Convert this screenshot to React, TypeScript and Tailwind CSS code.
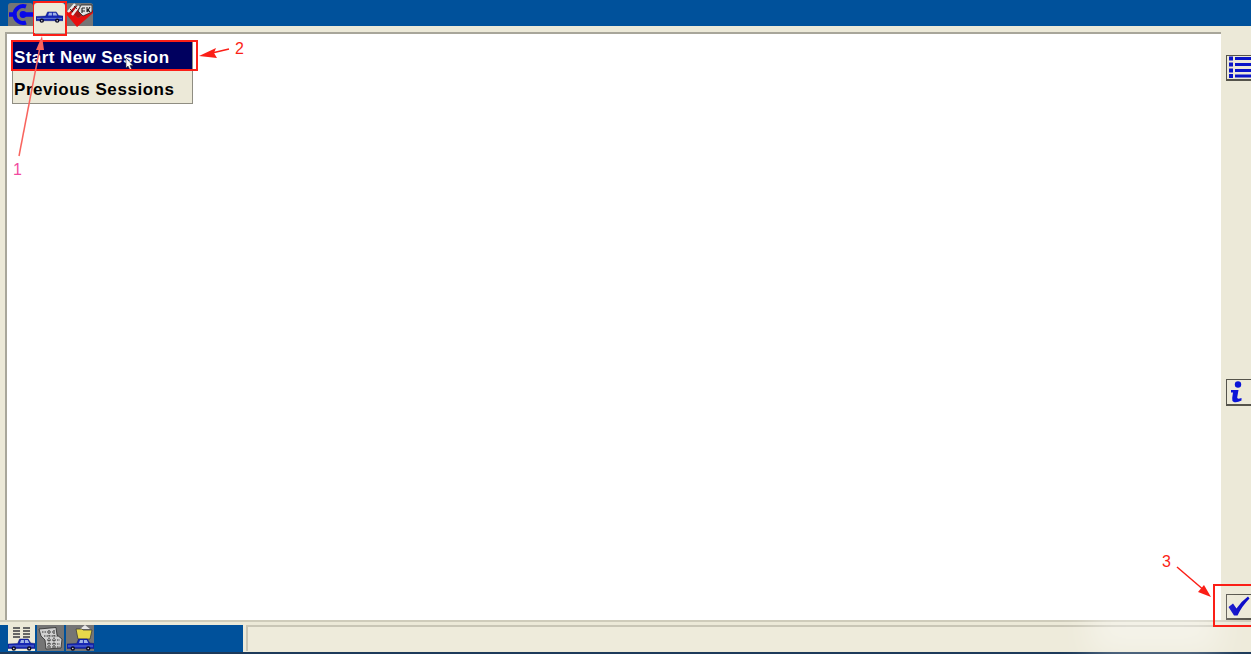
const font = "font-['Liberation_Sans',Arial,sans-serif]";

function Truck({ className }: { className?: string }) {
  return (
    <svg viewBox="0 0 28 13" preserveAspectRatio="none" className={className}>
      <path d="M0 6 L10 5.5 L12 1 L21 1 L23.5 5 L28 5.5 L28 10.5 L0 10.5 Z" fill="#1626b4" stroke="#0b1a70" strokeWidth="0.5" />
      <path d="M13.5 2 L16.5 2 L16.5 5 L12.5 5 Z M17.5 2 L20.5 2 L22 5 L17.5 5 Z" fill="#9fb2e6" />
      <path d="M1 8 H27" stroke="#7f95dd" strokeWidth="0.8" />
      <circle cx="6" cy="10.5" r="2.3" fill="#0c0c28" />
      <circle cx="22" cy="10.5" r="2.3" fill="#0c0c28" />
      <circle cx="6" cy="10.5" r="0.8" fill="#d8d8d8" />
      <circle cx="22" cy="10.5" r="0.8" fill="#d8d8d8" />
    </svg>
  );
}

function Connector() {
  return (
    <svg viewBox="0 0 25 23" className="h-[23px] w-[25px]">
      <path d="M1 11.5 H8 M13 11.5 H25" stroke="#0808e8" strokeWidth="4.5" />
      <path d="M18 3.5 A8.5 8.5 0 1 0 18 19.5" fill="none" stroke="#0808e8" strokeWidth="4" />
      <circle cx="15" cy="11.5" r="3.4" fill="#0808e8" />
    </svg>
  );
}

function Tools() {
  return (
    <svg viewBox="0 0 27 24" className="h-[24px] w-[27px]">
      <path d="M0 11 L11 24 L27 10 L27 7 L12 15 L3 7 Z" fill="#e80e0e" />
      <path d="M3 7 L12 15 L20 10 L10 3 Z" fill="#b01212" />
      <path d="M2 9 L9 1 M6 12 L13 3" stroke="#ececec" strokeWidth="2.4" />
      <path d="M4 6 L7 9 M8 3 L11 6" stroke="#222" strokeWidth="0.9" />
      <path d="M12 8 L15 2 L26 2 L26 9 L17 13 Z" fill="#e2e2e2" stroke="#222" strokeWidth="0.8" />
      <path d="M16 5 V10 M16 5 H19 M16 8 H19 M21 4 V9 M21 9 L24 4 M21 6 L24 9" fill="none" stroke="#222" strokeWidth="1.1" />
    </svg>
  );
}

function ListIcon() {
  return (
    <svg viewBox="0 0 23 23" className="h-[23px] w-[23px]">
      {[2.5, 8.5, 14.5, 20].map((y) => (
        <g key={y}>
          <rect x="1" y={y - 2} width="4" height="4" fill="#0a14c8" />
          <rect x="7" y={y - 1.5} width="16" height="3" fill="#0a14c8" />
        </g>
      ))}
    </svg>
  );
}

function InfoIcon() {
  return (
    <svg viewBox="0 0 16 22" className="h-[22px] w-[16px]">
      <circle cx="10" cy="3.5" r="3.2" fill="#0a14d8" />
      <path d="M3 9 H10.5 L9.2 16.5 Q9 18.5 13.5 17 L13.5 19.5 Q9 22 5.8 21 Q3.8 20 4.2 17 L5 11.5 H3 Z" fill="#0a14d8" />
    </svg>
  );
}

function CheckIcon() {
  return (
    <svg viewBox="0 0 22 20" className="h-[20px] w-[22px]">
      <path d="M0.5 11 L5 7.5 L8.5 12.5 Q13 5.5 20 0.5 L21.5 2.5 Q14 10 9.5 19.5 L6 19.5 Z" fill="#0808c8" />
    </svg>
  );
}

function FormMap() {
  return (
    <svg viewBox="0 0 25 23" className="h-[23px] w-[25px]">
      <path d="M1 2 L18 0.5 L19 8 L24 12 L23 21 L8 22 L7 13 L3 9 Z" fill="#d0d0d0" stroke="#2c2c2c" strokeWidth="0.8" />
      <path d="M4 5 H17 M6 9 H20 M9 13 H22 M9 17 H22 M9 20 H22 M11 3 V21 M16 3 V21" stroke="#333" strokeWidth="1.1" strokeDasharray="1.5 1" />
    </svg>
  );
}

function RailButton({ className, children }: { className?: string; children: React.ReactNode }) {
  return (
    <div className={`flex h-[27px] w-[30px] items-center justify-start border border-b-2 border-[#55534b] bg-[#ece9d8] pl-[1px] ${className ?? ''}`}>
      {children}
    </div>
  );
}

function Annotations() {
  return (
    <div className="pointer-events-none absolute inset-0">
      <div className="absolute left-[33px] top-[1px] h-[35px] w-[34px] border-2 border-[#fb1f17]" />
      <div className="absolute left-[11px] top-[40px] h-[31px] w-[187px] border-2 border-[#fb1f17]" />
      <div className="absolute left-[1213px] top-[584px] h-[43px] w-[40px] border-2 border-[#fb1f17]" />

      <svg className="absolute left-0 top-0 h-[654px] w-[1251px]" viewBox="0 0 1251 654">
        <path d="M19 156 L40 47" stroke="#f8645e" strokeWidth="1.5" />
        <path d="M42 36 L36 50 L44 50 Z" fill="#f8645e" />
        <path d="M229 49 L212 53" stroke="#fb1f17" strokeWidth="1.5" />
        <path d="M199 56 L216 48 L214 53 L217 58 Z" fill="#fb1f17" />
        <path d="M1177 567 L1205 591" stroke="#fb1f17" strokeWidth="1.5" />
        <path d="M1211 597 L1198 592 L1204 585 Z" fill="#fb1f17" />
      </svg>

      <span className={`absolute left-[13px] top-[160px] text-[16px] leading-[20px] text-[#f24aa0] ${font}`}>1</span>
      <span className={`absolute left-[235px] top-[39px] text-[16px] leading-[20px] text-[#fb1f17] ${font}`}>2</span>
      <span className={`absolute left-[1162px] top-[552px] text-[16px] leading-[20px] text-[#fb1f17] ${font}`}>3</span>
    </div>
  );
}

export default function App() {
  return (
    <div className={`relative flex h-[654px] w-[1251px] flex-col overflow-hidden bg-[#ece9d8] ${font}`}>
      {/* top tabs */}
      <div className="flex h-[26px] shrink-0 items-start gap-px bg-[#00519b] pl-[8px] pt-[3px]">
        <div className="flex h-[23px] w-[25px] items-center justify-center rounded-t-[3px] bg-[#757575]">
          <Connector />
        </div>
        <div className="relative z-10 flex h-[30px] w-[31px] items-start justify-center rounded-t-[3px] bg-[#ece9d8] pt-[8px]">
          <Truck className="h-[12px] w-[27px]" />
        </div>
        <div className="flex h-[23px] w-[27px] items-center justify-center rounded-t-[3px] bg-[#757575]">
          <Tools />
        </div>
      </div>

      {/* main */}
      <div className="flex min-h-0 flex-1">
        <div className="flex flex-1 flex-col pl-[5px] pt-[6px]">
          <div className="relative flex-1 border-l-2 border-t-2 border-[#a8a69a] bg-white">
            <div className="absolute left-[5px] top-[6px] h-[64px] w-[181px] border border-[#8f8d82] bg-[#ece9d8] text-[17px] font-bold tracking-[0.42px]">
              <div className="flex h-[29px] items-end bg-[#00005f] pl-px text-white">Start New Session</div>
              <div className="flex h-[32px] items-end pl-px tracking-[0.55px] text-black">Previous Sessions</div>
              {/* mouse pointer */}
              <svg viewBox="0 0 8 12" className="absolute left-[112px] top-[17px] h-[12px] w-[8px]">
                <path d="M1 0 V10 L3 8 L5 12 L6.5 11 L5 7.5 H8 Z" fill="#fff" stroke="#333" strokeWidth="0.6" />
              </svg>
            </div>
          </div>
        </div>
        <div className="flex w-[30px] shrink-0 flex-col pl-[5px] pt-[29px]">
          <RailButton><ListIcon /></RailButton>
          <RailButton className="mt-[298px]"><InfoIcon /></RailButton>
          <RailButton className="mt-[188px]"><CheckIcon /></RailButton>
        </div>
      </div>

      {/* bottom */}
      <div className="h-[5px] shrink-0 border-t-2 border-[#cfccbb] bg-[#ece9d8]" />
      <div className="flex h-[29px] shrink-0 border-b-2 border-[#1d3a5a]">
        <div className="flex w-[243px] items-start gap-[2px] bg-[#00519b] pl-[8px]">
          <div className="flex h-[26px] w-[27px] flex-col items-center justify-between bg-[#ece9d8] pt-[2px]">
            <div className="grid grid-cols-2 gap-x-[3px] gap-y-px">
              {[0, 1, 2, 3, 4, 5, 6, 7].map((i) => (
                <div key={i} className="h-[2px] w-[7px] bg-[#666]" />
              ))}
            </div>
            <Truck className="h-[13px] w-[27px]" />
          </div>
          <div className="flex h-[26px] w-[27px] items-center justify-center bg-[#757575]">
            <FormMap />
          </div>
          <div className="relative flex h-[26px] w-[28px] items-end justify-center bg-[#757575]">
            <svg viewBox="0 0 18 15" className="absolute left-[9px] top-0 h-[15px] w-[18px]">
              <path d="M10 0 L15 4 H5 Z" fill="#e8e8e8" />
              <path d="M1 4 H7 L8 5 H17 L15 14 H3 Z" fill="#e8d84a" stroke="#333" strokeWidth="0.7" />
            </svg>
            <Truck className="relative h-[13px] w-[27px]" />
          </div>
        </div>
        <div className="flex flex-1 bg-[#ece9d8] pl-[3px]">
          <div className="h-[26px] flex-1 border-l-2 border-t-2 border-[#c9c6b6] bg-[#eeebdb]" />
        </div>
      </div>

      {/* faint light patch in the lower right corner */}
      <div className="pointer-events-none absolute left-[1090px] top-[590px] h-[64px] w-[130px] bg-white/40 blur-lg" />
      <Annotations />
    </div>
  );
}
